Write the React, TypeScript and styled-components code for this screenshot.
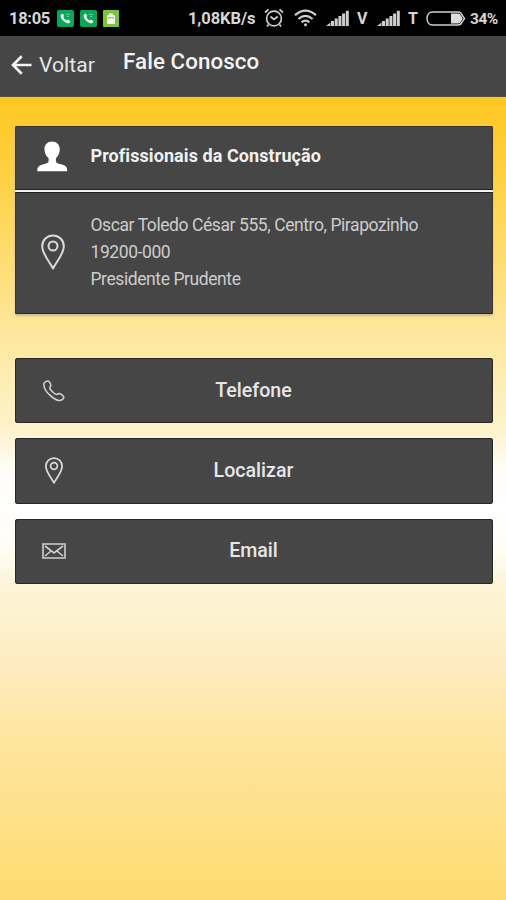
import React from "react";
import styled, { createGlobalStyle } from "styled-components";

const GlobalStyle = createGlobalStyle`
  * { box-sizing: border-box; }
  html, body { margin: 0; padding: 0; }
  body { font-family: Roboto, "Liberation Sans", sans-serif; overflow: hidden; }
`;

const Screen = styled.div`
  width: 506px;
  height: 900px;
  display: flex;
  flex-direction: column;
  overflow: hidden;
  background: linear-gradient(
    to bottom,
    #fec722 97px, #fed040 170px, #fedb6c 250px, #fee596 320px, #feeba9 360px,
    #fdf3cc 430px, #fffdf7 470px, #ffffff 510px, #fffdf3 550px,
    #fdf5d8 585px, #fdf0cc 630px, #feeabb 680px, #fee8a6 720px,
    #fee293 780px, #fee082 840px, #fedb70 900px
  );
`;

const StatusBar = styled.div`
  height: 36px;
  flex: none;
  display: flex;
  align-items: center;
  background: #000;
  color: #d6d6d6;
`;

const StatusText = styled.span<{ $size: number; $width: number; $gap: number; $track?: number }>`
  width: ${(p) => p.$width}px;
  flex: none;
  margin-left: ${(p) => p.$gap}px;
  padding-top: 2px;
  font-size: ${(p) => p.$size}px;
  letter-spacing: ${(p) => p.$track ?? 0}px;
  line-height: 20px;
  font-weight: 700;
  white-space: nowrap;
`;

const StatusIcon = styled.svg<{ $gap: number }>`
  flex: none;
  display: block;
  margin-left: ${(p) => p.$gap}px;
`;

const Header = styled.header`
  height: 61px;
  flex: none;
  display: flex;
  align-items: flex-start;
  background: #464646;
  border-bottom: 1px solid #55503f;
  color: #ececec;
`;

const BackButton = styled.button`
  display: flex;
  align-items: center;
  gap: 7px;
  height: 28px;
  width: 112px;
  margin: 15px 0 0 11px;
  padding: 0;
  border: 0;
  background: none;
  color: #e6e6e6;
  font: 400 21px/28px Roboto, sans-serif;
  letter-spacing: 0.1px;
`;

const Title = styled.h1`
  margin: 11px 0 0;
  font-size: 22.3px;
  line-height: 28px;
  font-weight: 500;
  letter-spacing: 0.1px;
  color: #f4f4f4;
`;

const Content = styled.main`
  display: flex;
  flex-direction: column;
  padding: 29px 13.5px 0 14.5px;
`;

const Card = styled.section`
  height: 188px;
  border-radius: 2px;
  background: #464646;
  box-shadow: inset 0 -1px 0 #272b31, inset 0 0 0 1px #373737, 0 2px 2px rgba(190, 180, 145, 0.85);
`;

const CardHead = styled.div`
  height: 66px;
  display: flex;
  align-items: center;
  padding-bottom: 3px;
  border-bottom: 2px solid #f2f2f2;
  box-shadow: inset 0 -1px 0 #222, 0 1px 0 #222;
`;

const CardBody = styled.div`
  height: 122px;
  display: flex;
  align-items: center;
  padding-bottom: 2px;
`;

const IconCell = styled.div`
  width: 76px;
  flex: none;
  display: flex;
  justify-content: center;
`;

const CompanyName = styled.h2`
  margin: 0;
  padding-bottom: 1px;
  font-size: 18px;
  line-height: 26px;
  font-weight: 700;
  letter-spacing: 0.08px;
  color: #f1f1f1;
`;

const Address = styled.address`
  padding-top: 1px;
  font-style: normal;
  font-size: 17.5px;
  line-height: 26.7px;
  letter-spacing: -0.42px;
  font-weight: 400;
  color: #cdcdcd;
  white-space: nowrap;
`;

const Actions = styled.div`
  display: flex;
  flex-direction: column;
  gap: 15px;
  margin-top: 44px;
`;

const ActionButton = styled.button`
  height: 65.3px;
  display: grid;
  grid-template-columns: 78px 1fr 78px;
  align-items: center;
  justify-items: center;
  padding: 0;
  border: 0;
  border-radius: 3px;
  background: #464646;
  box-shadow: inset 0 0 0 1px #272727;
  color: #e6e6e6;
  font: 500 19.6px/28px Roboto, sans-serif;
`;

function PhoneBadge({ gap }: { gap: number }) {
  return (
    <StatusIcon $gap={gap} width="17" height="17" viewBox="0 0 17 17">
      <rect width="17" height="17" rx="2" fill="#08a759" />
      <path d="M4 4.4 5.7 3.5 7.3 6 6.2 7.1Q7.2 9.3 9.7 10.5L10.8 9.5 13.4 11.1 12.6 12.8Q11.6 13.8 9.2 12.8C6 11.5 4.2 8.7 3.7 6.2Q3.5 5 4 4.4Z" fill="#f3fff8" />
      <path d="M9 4.4h4M10 6.5h2" stroke="#6dce9d" strokeWidth="1" />
    </StatusIcon>
  );
}

function Signal({ gap }: { gap: number }) {
  return (
    <StatusIcon $gap={gap} width="23" height="17" viewBox="0 0 23 17" fill="#cfcfcf">
      <path d="M0 16 4.4 12.5V16zM5 11h3v5H5zM8.7 8.5h3V16h-3zM12.4 6h3v10h-3zM16.1 3.4h3V16h-3zM19.8 .8h3V16h-3z" />
    </StatusIcon>
  );
}

function MapPin({ width, height, stroke }: { width: number; height: number; stroke: number }) {
  return (
    <svg width={width} height={height} viewBox="0 0 24 36" fill="none" stroke="#d9d9d9" strokeWidth={stroke}>
      <path d="M12 34.5C9.2 28.6 1.2 20 1.2 12.2A10.8 10.8 0 0 1 22.8 12.2C22.8 20 14.8 28.6 12 34.5Z" strokeLinejoin="round" />
      <circle cx="12" cy="12" r="4.5" />
    </svg>
  );
}

function PersonIcon() {
  return (
    <svg width="31" height="31" viewBox="0 0 32 31" fill="#fff">
      <path d="M15.5 0C20.2 0 23.5 3.2 23.5 8c0 3.8-1.7 7.3-4 9.3v2.8c0 2 2 2.6 5.3 3.5C29.5 25 31.2 26.2 31.2 30.6H.3c0-4.4 1.7-5.6 6.4-7 3.3-.9 5.3-1.5 5.3-3.5v-2.8C9.5 15.3 7.7 11.8 7.7 8 7.7 3.2 10.8 0 15.5 0Z" />
    </svg>
  );
}

function HandsetIcon() {
  return (
    <svg width="22" height="22" viewBox="0 0 22 22" fill="none" stroke="#d0d0d0" strokeWidth="1.6" strokeLinejoin="round">
      <path d="M1.2 3.2C2.2 1.2 5 .3 6.2 1.8 7.5 3.3 8.6 5.2 7.2 6.7 6.1 7.8 6.5 8.8 9 11.3c2.2 2.3 3.8 3.8 5 3.1 1.8-1.4 3.8-.6 5.6.9 2 1.7 1 3.5-.5 4.4-2.2 1.6-5.7.7-10.1-2.7C4.5 13.5 1.1 9.3.9 5.3Q.8 4 1.2 3.2Z" />
    </svg>
  );
}

function EnvelopeIcon() {
  return (
    <svg width="24" height="16" viewBox="0 0 24 16" fill="none" stroke="#cfcfcf" strokeWidth="1.6">
      <path d="M1 1h22v14H1z" />
      <path d="M3 3 12 10 21 3M3 13 9 8M21 13 15 8" />
    </svg>
  );
}

export default function App() {
  return (
    <>
      <GlobalStyle />
      <Screen>
        <StatusBar>
          <StatusText $size={16.5} $width={41} $gap={9} $track={-0.3}>18:05</StatusText>
          <PhoneBadge gap={7} />
          <PhoneBadge gap={6} />
          <StatusIcon $gap={6} width="16" height="17" viewBox="0 0 16 17">
            <rect width="16" height="17" rx="1" fill="#79c536" />
            <path d="M4 5h2V3.5h4V5h2v9H4z" fill="#f5fff0" />
            <path d="M5.5 9V7.5h5V9" fill="none" stroke="#79c536" />
          </StatusIcon>
          <StatusText $size={16.5} $width={67} $gap={69} $track={-0.1}>1,08KB/s</StatusText>
          <StatusIcon $gap={9} width="20" height="20" viewBox="0 0 20 20" fill="none" stroke="#cfcfcf" strokeWidth="1.7">
            <circle cx="10" cy="10.5" r="7.4" />
            <path d="M1 4.5 4.5 1.3M19 4.5l-3.5-3.2M4.5 16.5 3 18.5M15.5 16.5l1.5 2M6.5 8.5l3.5 3 3.7-3" />
          </StatusIcon>
          <StatusIcon $gap={10} width="23" height="18" viewBox="0 0 23 18" fill="none" stroke="#cfcfcf" strokeWidth="2.2">
            <path d="M1 6.2Q11.5-3 22 6.2M4.4 10Q11.5 3.8 18.6 10M7.6 13.4Q11.5 10 15.4 13.4" />
            <circle cx="11.5" cy="15.7" r="1.5" fill="#cfcfcf" stroke="none" />
          </StatusIcon>
          <Signal gap={9} />
          <StatusText $size={16} $width={12} $gap={8}>V</StatusText>
          <Signal gap={8} />
          <StatusText $size={16} $width={11} $gap={8}>T</StatusText>
          <StatusIcon $gap={7} width="40" height="15" viewBox="0 0 40 15">
            <path d="M6.5 1H32q3 0 4 3l2.5 3.5L36 11q-1 3-4 3H6.5C-.8 14-.8 1 6.5 1Z" fill="none" stroke="#cfcfcf" strokeWidth="1.5" />
            <path d="M25 2.5h7q2 0 3 2l1.7 3L35 10.5q-1 2-3 2h-7z" fill="#dedede" />
          </StatusIcon>
          <StatusText $size={15.5} $width={30} $gap={4} $track={-0.5}>34%</StatusText>
        </StatusBar>

        <Header>
          <BackButton type="button">
            <svg width="21" height="20" viewBox="0 0 21 20" fill="none" stroke="#f2f2f2" strokeWidth="2.7">
              <path d="M20.5 10H2.5M10.7 1.3 2 10l8.7 8.7" />
            </svg>
            Voltar
          </BackButton>
          <Title>Fale Conosco</Title>
        </Header>

        <Content>
          <Card>
            <CardHead>
              <IconCell><PersonIcon /></IconCell>
              <CompanyName>Profissionais da Construção</CompanyName>
            </CardHead>
            <CardBody>
              <IconCell><MapPin width={24} height={36} stroke={2} /></IconCell>
              <Address>
                Oscar Toledo César 555, Centro, Pirapozinho<br />
                19200-000<br />
                Presidente Prudente
              </Address>
            </CardBody>
          </Card>

          <Actions>
            <ActionButton type="button"><HandsetIcon /><span>Telefone</span></ActionButton>
            <ActionButton type="button"><MapPin width={18} height={27} stroke={2.3} /><span>Localizar</span></ActionButton>
            <ActionButton type="button"><EnvelopeIcon /><span>Email</span></ActionButton>
          </Actions>
        </Content>
      </Screen>
    </>
  );
}
